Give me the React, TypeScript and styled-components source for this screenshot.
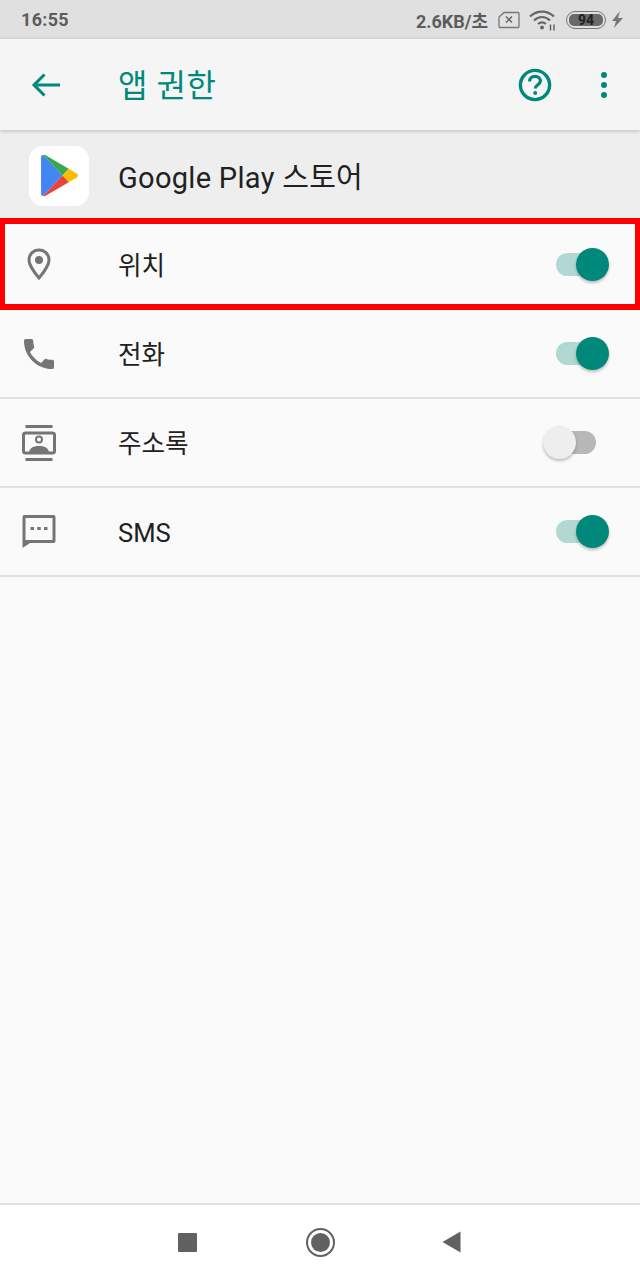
import React from "react";
import styled, { createGlobalStyle } from "styled-components";

const GlobalStyle = createGlobalStyle`
  html, body {
    margin: 0;
    padding: 0;
    background: #fafafa;
  }
  * {
    box-sizing: border-box;
  }
`;

const FONT = `Roboto, "Noto Sans CJK KR", sans-serif`;
const TEAL = "#00897b";
const GREY = "#757575";

const Page = styled.div`
  width: 640px;
  height: 1280px;
  display: flex;
  flex-direction: column;
  background: #fafafa;
  font-family: ${FONT};
`;

const StatusBar = styled.div`
  height: 39px;
  flex: none;
  display: flex;
  align-items: center;
  justify-content: space-between;
  padding: 0 17px 0 21px;
  background: #e0e0e0;
  color: #5c5c5c;
`;

const Clock = styled.span`
  font-size: 18px;
  font-weight: 700;
  letter-spacing: 0.3px;
`;

const StatusRight = styled.div`
  display: flex;
  align-items: center;
`;

const Speed = styled.span`
  font-size: 18px;
  font-weight: 700;
  margin-right: 10px;
`;

const WifiSlot = styled.div`
  display: flex;
  margin-left: 9px;
`;

const BatteryShell = styled.div`
  width: 40px;
  height: 18px;
  margin: 0 6px 0 9px;
  padding: 2px;
  border: 1.5px solid #777;
  border-radius: 9px;
`;

const BatteryFill = styled.div`
  width: 100%;
  height: 100%;
  display: flex;
  align-items: center;
  justify-content: center;
  border-radius: 5px;
  background: #6a6a6a;
  color: #222;
  font-size: 14px;
  font-weight: 700;
  line-height: 1;
`;

const AppBar = styled.header`
  height: 91px;
  flex: none;
  display: flex;
  align-items: center;
  padding: 0 31px 0 31px;
  background: #f5f5f5;
  box-shadow: 0 1px 4px rgba(0, 0, 0, 0.22);
  position: relative;
`;

const Title = styled.h1`
  flex: 1;
  margin: 2px 0 0 57px;
  color: ${TEAL};
  font-size: 32px;
  font-weight: 400;
  letter-spacing: 0.6px;
  line-height: 1;
`;

const AppBarActions = styled.div`
  display: flex;
  align-items: center;
  gap: 47px;
`;

const AppHeader = styled.div`
  height: 91px;
  flex: none;
  display: flex;
  align-items: center;
  padding-left: 29px;
  background: #eeeeee;
`;

const AppIcon = styled.div`
  width: 60px;
  height: 60px;
  flex: none;
  display: flex;
  align-items: center;
  justify-content: center;
  padding-left: 1px;
  border-radius: 14px;
  background: #fff;
`;

const AppName = styled.span`
  margin: 0 0 2px 29px;
  color: #212121;
  font-size: 29px;
  letter-spacing: 0.3px;
`;

const List = styled.div`
  flex: 1;
  position: relative;
`;

const Row = styled.div`
  height: 89px;
  display: flex;
  align-items: center;
  padding: 0 32px 0 22px;
  border-bottom: 2px solid #e0e0e0;
`;

const RowIcon = styled.div`
  width: 34px;
  height: 40px;
  flex: none;
  display: flex;
  align-items: center;
  justify-content: center;
`;

const RowLabel = styled.span<{ $latin?: boolean }>`
  flex: 1;
  margin: ${(p) => (p.$latin ? "3px 0 0 62px" : "0 0 2px 62px")};
  color: #212121;
  font-size: 25.6px;
`;

const Switch = styled.div<{ $on: boolean }>`
  width: 53px;
  height: 33px;
  flex: none;
  position: relative;
  margin-right: ${(p) => (p.$on ? "0" : "12px")};
`;

const Track = styled.div<{ $on: boolean }>`
  position: absolute;
  top: 5px;
  left: ${(p) => (p.$on ? "1px" : "12px")};
  width: 41px;
  height: 23px;
  border-radius: 12px;
  background: ${(p) => (p.$on ? "#b2d8d4" : "#b7b7b7")};
`;

const Thumb = styled.div<{ $on: boolean }>`
  position: absolute;
  top: 0;
  left: ${(p) => (p.$on ? "21px" : "0")};
  width: 33px;
  height: 33px;
  border-radius: 50%;
  background: ${(p) => (p.$on ? TEAL : "#eeeeee")};
  box-shadow: 0 2px 3px rgba(0, 0, 0, 0.25);
`;

const Highlight = styled.div`
  position: absolute;
  top: -3px;
  left: 0;
  right: 0;
  height: 92px;
  border: 5px solid #ff0000;
  border-top-width: 6px;
  border-bottom-width: 6px;
  pointer-events: none;
`;

const NavBar = styled.nav`
  height: 77px;
  flex: none;
  display: flex;
  align-items: center;
  gap: 109px;
  padding: 0 0 1px 178px;
  background: #fff;
  border-top: 2px solid #e0e0e0;
`;

const NavSquare = styled.div`
  width: 19px;
  height: 19px;
  border-radius: 1px;
  background: #616161;
`;

const NavHome = styled.div`
  width: 29px;
  height: 29px;
  padding: 3px;
  border: 2px solid #616161;
  border-radius: 50%;
`;

const NavHomeDot = styled.div`
  width: 100%;
  height: 100%;
  border-radius: 50%;
  background: #616161;
`;

const NavBack = styled.div`
  display: flex;
  margin-left: -2px;
`;

const SimIcon = () => (
  <svg width="22" height="18" viewBox="0 0 22 18">
    <path d="M6 1.5h14a1 1 0 0 1 1 1v13a1 1 0 0 1-1 1H2a1 1 0 0 1-1-1V6z" fill="none" stroke="#777" strokeWidth="1.3" />
    <path d="M8 5.500l6 6M14 5.500l-6 6" stroke="#666" strokeWidth="1.5" />
  </svg>
);

const WifiIcon = () => (
  <svg width="28" height="22" viewBox="0 0 28 22">
    <path d="M1 7.500C8 1 18 1 25 7.500" fill="none" stroke="#666" strokeWidth="2.2" />
    <path d="M5 11.500c5-4.500 11-4.500 16 0" fill="none" stroke="#666" strokeWidth="2.2" />
    <path d="M9 15c3-2.500 5-2.500 8 0" fill="none" stroke="#666" strokeWidth="2.2" />
    <circle cx="13" cy="18.500" r="2" fill="#666" />
    <path d="M21.500 15.500v6M25 15.500v6" stroke="#555" strokeWidth="1.3" />
  </svg>
);

const BoltIcon = () => (
  <svg width="11" height="17" viewBox="0 0 11 17">
    <path d="M8 0L0 10h4l-2 7 9-10H6z" fill="#777" />
  </svg>
);

const BackIcon = () => (
  <svg width="30" height="26" viewBox="0 0 30 26">
    <path d="M29 13H4M13.500 2.500L3 13l10.500 10.500" fill="none" stroke={TEAL} strokeWidth="3" />
  </svg>
);

const HelpIcon = () => (
  <svg width="34" height="34" viewBox="0 0 34 34">
    <circle cx="17" cy="17" r="14.600" fill="none" stroke={TEAL} strokeWidth="3.400" />
    <path d="M11.600 13.400c0-3 2.400-5 5.400-5s5.400 2 5.400 4.700c0 3.600-5.100 3.800-5.100 7.400" fill="none" stroke={TEAL} strokeWidth="3.200" />
    <circle cx="17.200" cy="25" r="2" fill={TEAL} />
  </svg>
);

const MoreIcon = () => (
  <svg width="10" height="28" viewBox="0 0 10 28">
    <circle cx="5" cy="4" r="3" fill={TEAL} />
    <circle cx="5" cy="14" r="3" fill={TEAL} />
    <circle cx="5" cy="24" r="3" fill={TEAL} />
  </svg>
);

const PlayLogo = () => (
  <svg width="39" height="43" viewBox="0 0 38 42">
    <path d="M1 3v36q0 2 2 2l19-20L3 1Q1 1 1 3z" fill="#4285f4" />
    <path d="M3 1q1-.5 2 0l23 13.500-6 6.500z" fill="#34a853" />
    <path d="M28 14.500l8 4.500q2 2 0 4l-8 4.500-6-6.500z" fill="#fbbc04" />
    <path d="M3 41q1 .5 2 0l23-13.500-6-6.500z" fill="#ea4335" />
  </svg>
);

const PinIcon = () => (
  <svg width="24" height="33" viewBox="0 0 24 33">
    <path d="M12 2C6.200 2 2 6.400 2 12c0 6.500 10 18 10 18s10-11.500 10-18c0-5.600-4.200-10-10-10z" fill="none" stroke={GREY} strokeWidth="3" />
    <circle cx="12" cy="12" r="4" fill={GREY} />
  </svg>
);

const PhoneIcon = () => (
  <svg width="30" height="30" viewBox="3 3 18 18">
    <path d="M20 15.500c-1.250 0-2.450-.2-3.570-.57-.35-.11-.74-.03-1.020.24l-2.200 2.200c-2.830-1.440-5.150-3.750-6.590-6.590l2.200-2.210c.28-.26.36-.65.25-1C8.700 6.450 8.500 5.250 8.500 4c0-.55-.45-1-1-1H4c-.55 0-1 .45-1 1 0 9.390 7.610 17 17 17 .55 0 1-.45 1-1v-3.500c0-.55-.45-1-1-1z" fill={GREY} />
  </svg>
);

const ContactsIcon = () => (
  <svg width="34" height="36" viewBox="0 0 34 36">
    <path d="M3.500 1.500h27M3.500 34.500h27" stroke={GREY} strokeWidth="3" />
    <rect x="1.500" y="8" width="31" height="20" rx="2" fill="none" stroke={GREY} strokeWidth="3" />
    <circle cx="17" cy="14.500" r="3" fill="none" stroke={GREY} strokeWidth="2" />
    <path d="M7 27c1-4.500 5-6 10-6s9 1.500 10 6z" fill={GREY} />
  </svg>
);

const MessageIcon = () => (
  <svg width="34" height="33" viewBox="0 0 34 33">
    <path
      fillRule="evenodd"
      d="M2.500 0h29A2 2 0 0 1 33.500 2v24a2 2 0 0 1-2 2H8L.5 33V2a2 2 0 0 1 2-2zM3.500 3v22h27V3z"
      fill={GREY}
    />
    <path d="M8.500 12h3.500v3h-3.500zM15.250 12h3.500v3h-3.500zM22 12h3.500v3h-3.500z" fill={GREY} />
  </svg>
);

const BackTriangle = () => (
  <svg width="19" height="22" viewBox="0 0 19 22">
    <path d="M18.500 0.500v21L0.500 11z" fill="#616161" />
  </svg>
);

const rows = [
  { label: "위치", icon: <PinIcon />, on: true },
  { label: "전화", icon: <PhoneIcon />, on: true },
  { label: "주소록", icon: <ContactsIcon />, on: false },
  { label: "SMS", icon: <MessageIcon />, on: true, latin: true },
];

export default function App() {
  return (
    <Page>
      <GlobalStyle />
      <StatusBar>
        <Clock>16:55</Clock>
        <StatusRight>
          <Speed>2.6KB/초</Speed>
          <SimIcon />
          <WifiSlot>
            <WifiIcon />
          </WifiSlot>
          <BatteryShell>
            <BatteryFill>94</BatteryFill>
          </BatteryShell>
          <BoltIcon />
        </StatusRight>
      </StatusBar>
      <AppBar>
        <BackIcon />
        <Title>앱 권한</Title>
        <AppBarActions>
          <HelpIcon />
          <MoreIcon />
        </AppBarActions>
      </AppBar>
      <AppHeader>
        <AppIcon>
          <PlayLogo />
        </AppIcon>
        <AppName>Google Play 스토어</AppName>
      </AppHeader>
      <List>
        {rows.map((row) => (
          <Row key={row.label}>
            <RowIcon>{row.icon}</RowIcon>
            <RowLabel $latin={row.latin}>{row.label}</RowLabel>
            <Switch $on={row.on}>
              <Track $on={row.on} />
              <Thumb $on={row.on} />
            </Switch>
          </Row>
        ))}
        <Highlight />
      </List>
      <NavBar>
        <NavSquare />
        <NavHome>
          <NavHomeDot />
        </NavHome>
        <NavBack>
          <BackTriangle />
        </NavBack>
      </NavBar>
    </Page>
  );
}
